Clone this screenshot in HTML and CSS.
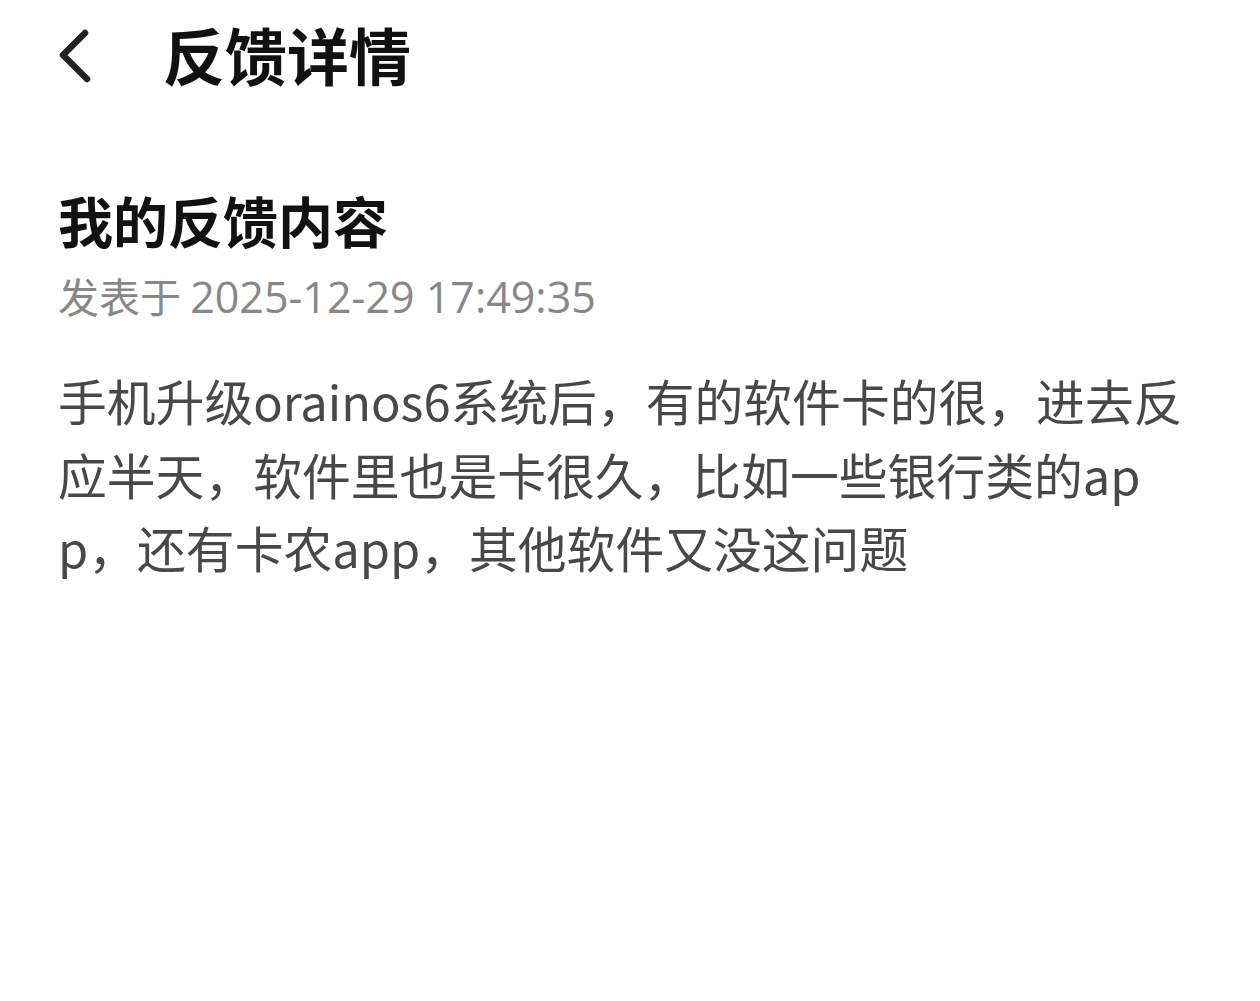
FILE: index.html
```html
<!DOCTYPE html>
<html lang="zh-CN">
<head>
<meta charset="UTF-8" />
<meta name="viewport" content="width=device-width, initial-scale=1" />
<title>反馈详情</title>
<link rel="stylesheet" href="styles.css">
</head>
<body>

<header class="topbar">
  <button class="back" aria-label="返回">
    <svg width="40" height="60" viewBox="0 0 40 60">
      <path d="M29 9 L7 31 L31 55" fill="none" stroke="#222" stroke-width="6.5" stroke-linecap="round" stroke-linejoin="round" />
    </svg>
  </button>
  <h1>反馈详情</h1>
</header>

<main class="detail">
  <h2>我的反馈内容</h2>
  <div class="meta">发表于 <span class="time">2025-12-29 17:49:35</span></div>
  <p class="content">手机升级orainos6系统后，有的软件卡的很，进去反应半天，软件里也是卡很久，比如一些银行类的app，还有卡农app，其他软件又没这问题</p>
</main>

</body>
</html>
```

FILE: styles.css
```css
body {
  margin: 0;
  background: #fff;
  font-family: "Noto Sans CJK SC", "Noto Sans", sans-serif;
  color: #111;
}
.topbar {
  height: 108px;
  display: flex;
  align-items: center;
  padding-left: 56px;
}
.back {
  width: 40px;
  height: 60px;
  padding: 0;
  border: none;
  background: none;
  display: flex;
  margin-right: 67px;
}
.topbar h1 {
  margin: 0;
  font-size: 62px;
  font-weight: 700;
  line-height: 1;
  color: #111;
}
.detail {
  padding: 0 60px 0 58px;
}
.detail h2 {
  margin: 75px 0 0;
  font-size: 55px;
  font-weight: 700;
  line-height: 72px;
  color: #111;
}
.meta {
  margin-top: 10px;
  font-size: 41px;
  line-height: 60px;
  color: #888;
}
/* digits are wider than the CJK font's own latin */
.meta .time {
  font-family: "Open Sans", "Noto Sans CJK SC", sans-serif;
  font-size: 43px;
}
.content {
  margin: 36px 0 0;
  font-size: 48.8px;
  line-height: 73.5px;
  color: #484848;
  word-break: break-all;
}
```
